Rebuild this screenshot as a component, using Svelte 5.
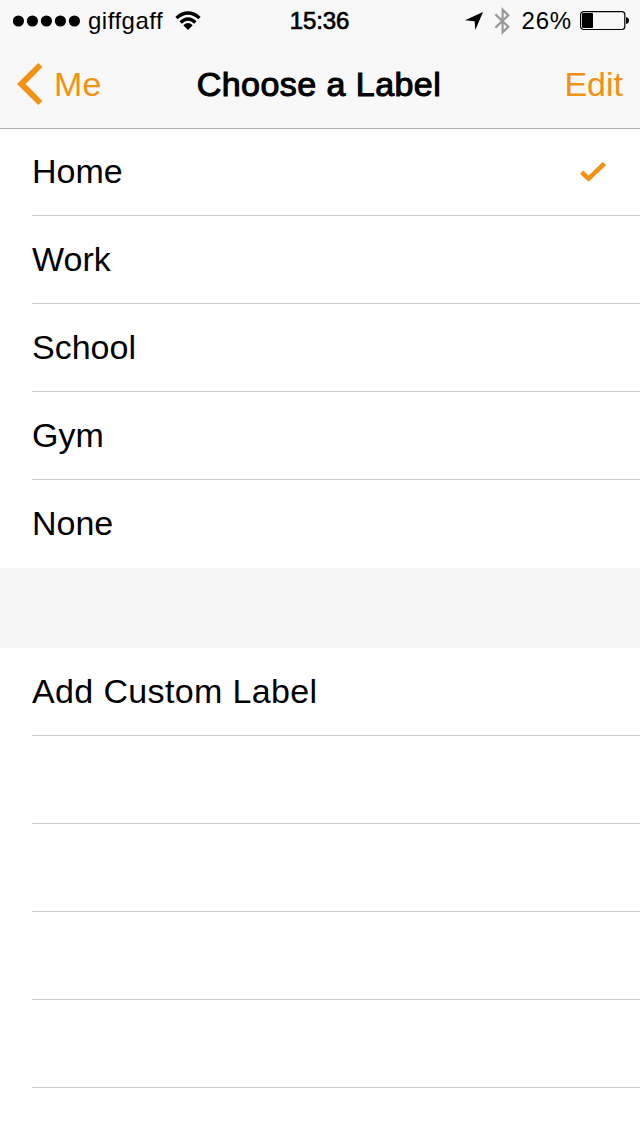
<script lang="ts">
    type Label = {
        name: string,
        value: string
    }

    const labels: Array<Label> = [
        { name: "Home", value: "home" },
        { name: "Work", value: "work" },
        { name: "School", value: "school" },
        { name: "Gym", value: "gym" },
        { name: "None", value: "none" }
    ]

    const signalDots = 5
    const emptyRows = 5

    let selected = $state("home")
</script>

<div class="screen">
    <header>
        <div class="status">
            <div class="carrier">
                <svg width="68" height="12" viewBox="0 0 68 12">
                    {#each Array(signalDots) as _, i}
                        <circle cx={5.4 + i * 14} cy="6" r="5.6" />
                    {/each}
                </svg>
                <span class="network">giffgaff</span>
                <svg class="wifi" width="26" height="20" viewBox="0 0 26 20">
                    <path d="M1.5 7 Q13 -3 24.5 7" fill="none" stroke="#000" stroke-width="3.4" />
                    <path d="M5.6 11.5 Q13 4.7 20.4 11.5" fill="none" stroke="#000" stroke-width="3.3" />
                    <path d="M8.3 14.2 Q13 10 17.7 14.2 L13 19 Z" />
                </svg>
            </div>
            <span class="time">15:36</span>
            <div class="indicators">
                <svg class="location" width="18" height="18" viewBox="0 0 18 18">
                    <path d="M18 0 L10.3 18 L9.6 9.2 L0 8.2 Z" />
                </svg>
                <svg class="bluetooth" width="17" height="28" viewBox="0 0 17 28">
                    <path d="M1.4 7.4 L14.3 19.8 L8.6 25.3 V2.7 L14.3 8.2 L1.4 20.6" fill="none" stroke="#999" stroke-width="2.2" />
                </svg>
                <span class="percent">26%</span>
                <svg class="battery" width="50" height="20" viewBox="0 0 50 20">
                    <rect x=".6" y=".6" width="44.2" height="17.9" rx="3" fill="none" stroke="#000" stroke-width="1.2" />
                    <rect x="2" y="2" width="11" height="15" rx="1" />
                    <path d="M46 6 Q49 6.5 49 9.5 Q49 12.5 46 13 Z" />
                </svg>
            </div>
        </div>
        <nav>
            <button class="back">
                <svg width="26" height="42" viewBox="0 0 26 42">
                    <path d="M21.3 0 L0 21 L21.3 42 L25.4 38 L8.6 21 L25.4 4 Z" fill="#f29112" />
                </svg>
                <span>Me</span>
            </button>
            <h1>Choose a Label</h1>
            <button class="edit">Edit</button>
        </nav>
    </header>

    <div class="group" role="radiogroup">
        {#each labels as label}
            <button class="row" role="radio" aria-checked={selected == label.value} onclick={() => selected = label.value}>
                <span>{label.name}</span>
                {#if selected == label.value}
                    <svg width="26" height="20" viewBox="0 0 26 20">
                        <path d="M1.6 10.2 L8.6 16.6 L24.4 1.6" fill="none" stroke="#f29112" stroke-width="4.6" />
                    </svg>
                {/if}
            </button>
        {/each}
    </div>

    <div class="group">
        <button class="row custom"><span>Add Custom Label</span></button>
        {#each Array(emptyRows) as _}
            <div class="row"></div>
        {/each}
    </div>
</div>

<style>
    :global(body) {
        margin: 0;
        background: #fff;
    }
    .screen {
        width: 640px;
        height: 1136px;
        overflow: hidden;
        background: #f7f7f7;
        color: #000;
        font-family: "Liberation Sans", Arial, sans-serif;
        font-size: 34px;
    }
    svg {
        display: block;
        flex: none;
    }
    button {
        border: 0;
        padding: 0;
        background: none;
        color: inherit;
        font: inherit;
        text-align: left;
    }
    header {
        position: relative;
        height: 128px;
        background: #f8f8f8;
        box-shadow: 0 1px #b2b2b2;
    }
    .status {
        display: grid;
        grid-template-columns: 1fr auto 1fr;
        height: 40px;
        padding: 0 10px 0 13px;
        font-size: 24px;
        line-height: 41px;
    }
    .carrier, .indicators {
        display: flex;
        align-items: center;
        height: 41px;
    }
    .network {
        margin-left: 7px;
        letter-spacing: 0.5px;
    }
    .wifi {
        margin-left: 12px;
    }
    .time {
        margin: 0 2px 0 -2px;
        letter-spacing: -0.1px;
        -webkit-text-stroke: 0.7px #000;
    }
    .indicators {
        justify-content: flex-end;
    }
    .bluetooth {
        margin-left: 11px;
    }
    .percent {
        margin-left: 11px;
        letter-spacing: 0.8px;
    }
    .battery {
        margin-left: 8px;
    }
    nav {
        display: grid;
        grid-template-columns: 1fr auto 1fr;
        align-items: center;
        height: 88px;
        padding: 0 17px;
    }
    .back, .edit {
        color: #f29112;
    }
    .back {
        display: flex;
        align-items: center;
        gap: 11px;
        letter-spacing: 0.3px;
    }
    .edit {
        justify-self: end;
    }
    h1 {
        margin: 0 1px 0 -1px;
        font-size: 34px;
        font-weight: 400;
        letter-spacing: 0.45px;
        -webkit-text-stroke: 1.1px #000;
    }
    .group {
        padding-left: 32px;
        background: #fff;
    }
    .group + .group {
        margin-top: 80px;
    }
    .row {
        box-sizing: border-box;
        display: flex;
        align-items: center;
        justify-content: space-between;
        width: 100%;
        height: 88px;
        padding-right: 34px;
        border-bottom: 1px solid #c8c8c8;
    }
    .custom {
        letter-spacing: 0.36px;
    }
    .group:first-of-type .row:last-child {
        border-color: transparent;
    }
</style>
